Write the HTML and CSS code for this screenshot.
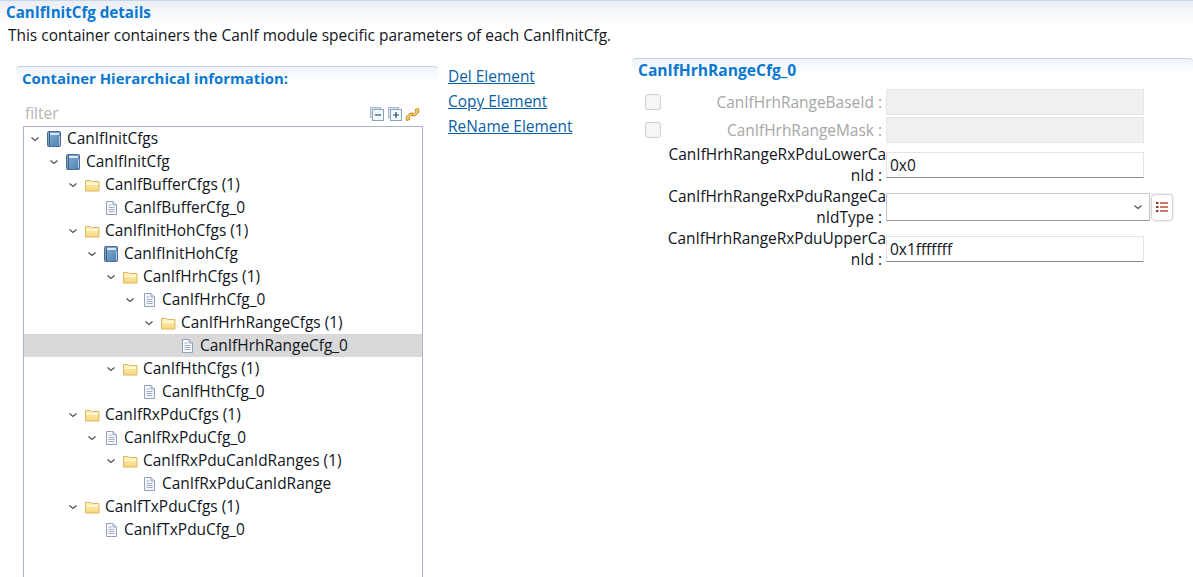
FILE: index.html
```html
<!DOCTYPE html>
<html lang="en">
<head>
<meta charset="utf-8">
<title>CanIfInitCfg details</title>
<link rel="stylesheet" href="styles.css">
</head>
<body>
<svg class="defs" width="0" height="0" aria-hidden="true">
  <defs>
    <linearGradient id="bookFill" x1="0" y1="0" x2="1" y2="1">
      <stop offset="0" stop-color="#8db2d4"/><stop offset="1" stop-color="#4d7fae"/>
    </linearGradient>
    <linearGradient id="folderFill" x1="0" y1="0" x2="0" y2="1">
      <stop offset="0" stop-color="#fdf0b8"/><stop offset="1" stop-color="#f8d77a"/>
    </linearGradient>
    <symbol id="chev" viewBox="0 0 12 12"><path d="M2.500 4.500l3.500 3 3.500-3" fill="none" stroke="#46505a" stroke-width="1.200"/></symbol>
    <symbol id="book" viewBox="0 0 16 16">
      <rect x="1.500" y="0.500" width="13" height="15" rx="1" fill="url(#bookFill)" stroke="#4a6d94"/>
      <rect x="4" y="2" width="9" height="2" fill="#dbe8f3"/>
      <path d="M3.500 1v14" stroke="#3d5f85"/>
      <path d="M13.500 5v9" stroke="#b4cde2"/>
    </symbol>
    <symbol id="folder" viewBox="0 0 16 16">
      <path d="M1.500 3.500h5l1 1h7.500v9.500h-13.500z" fill="url(#folderFill)" stroke="#dcb964"/>
      <path d="M2.500 7h11.500" stroke="#fffbe6" stroke-width="1.500"/>
    </symbol>
    <symbol id="doc" viewBox="0 0 16 16">
      <path d="M3.500 1.500h6.500l3.500 3.500v9.500h-10z" fill="#f8f9fc" stroke="#929fc0"/>
      <path d="M10 1.500v3.500h3.500" fill="none" stroke="#929fc0"/>
      <path d="M5.500 5h3M5.500 7.500h6M5.500 9.500h6M5.500 11.500h6" stroke="#a3aec4"/>
    </symbol>
    <symbol id="collapse" viewBox="0 0 14 14">
      <rect x="0.500" y="0.500" width="10" height="10" fill="#dbe6f1" stroke="#a3b9d0"/>
      <rect x="2.500" y="2.500" width="11" height="11" fill="#f5f8fb" stroke="#8aa3bd"/>
      <path d="M5 8h6" stroke="#1f4a73" stroke-width="1.200"/>
    </symbol>
    <symbol id="expand" viewBox="0 0 14 14">
      <rect x="0.500" y="0.500" width="10" height="10" fill="#dbe6f1" stroke="#a3b9d0"/>
      <rect x="2.500" y="2.500" width="11" height="11" fill="#f5f8fb" stroke="#8aa3bd"/>
      <path d="M5 8h6M8 5v6" stroke="#1f4a73" stroke-width="1.200"/>
    </symbol>
    <symbol id="sync" viewBox="0 0 15 15">
      <path d="M1.500 13.500l-.5-3.500 4-4 3 .5-.5 2.500-2-.5-1.500 1.500 1 2.500z" fill="#f3cf74" stroke="#c98f1f"/>
      <path d="M13.500 1.500l.5 3.500-4 4-3-.5.5-2.500 2 .5 1.500-1.500-1-2.500z" fill="#f3cf74" stroke="#c98f1f"/>
    </symbol>
    <symbol id="list" viewBox="0 0 14 14">
      <path d="M1 3h2.500M1 7h2.500M1 11h2.500" stroke="#9c3a26" stroke-width="2"/>
      <path d="M5 3h8M5 7h8M5 11h8" stroke="#b5533a" stroke-width="1.300"/>
    </symbol>
  </defs>
</svg>

<header class="page-head">
  <h1 class="page-title">CanIfInitCfg details</h1>
</header>
<p class="page-desc">This container containers the CanIf module specific parameters of each CanIfInitCfg.</p>

<main class="columns">
  <section class="panel tree-panel">
    <h2 class="panel-title">Container Hierarchical information:</h2>
    <div class="filter-row">
      <span class="filter">filter</span>
      <span class="tools">
        <svg class="tool"><use href="#collapse"/></svg>
        <svg class="tool"><use href="#expand"/></svg>
        <svg class="tool wide"><use href="#sync"/></svg>
      </span>
    </div>
    <ul class="tree">
      <li class="row l0"><svg class="tw"><use href="#chev"/></svg><svg class="ic"><use href="#book"/></svg><span>CanIfInitCfgs</span></li>
      <li class="row l1"><svg class="tw"><use href="#chev"/></svg><svg class="ic"><use href="#book"/></svg><span>CanIfInitCfg</span></li>
      <li class="row l2"><svg class="tw"><use href="#chev"/></svg><svg class="ic"><use href="#folder"/></svg><span>CanIfBufferCfgs (1)</span></li>
      <li class="row l3"><span class="tw"></span><svg class="ic"><use href="#doc"/></svg><span>CanIfBufferCfg_0</span></li>
      <li class="row l2"><svg class="tw"><use href="#chev"/></svg><svg class="ic"><use href="#folder"/></svg><span>CanIfInitHohCfgs (1)</span></li>
      <li class="row l3"><svg class="tw"><use href="#chev"/></svg><svg class="ic"><use href="#book"/></svg><span>CanIfInitHohCfg</span></li>
      <li class="row l4"><svg class="tw"><use href="#chev"/></svg><svg class="ic"><use href="#folder"/></svg><span>CanIfHrhCfgs (1)</span></li>
      <li class="row l5"><svg class="tw"><use href="#chev"/></svg><svg class="ic"><use href="#doc"/></svg><span>CanIfHrhCfg_0</span></li>
      <li class="row l6"><svg class="tw"><use href="#chev"/></svg><svg class="ic"><use href="#folder"/></svg><span>CanIfHrhRangeCfgs (1)</span></li>
      <li class="row l7 selected"><span class="tw"></span><svg class="ic"><use href="#doc"/></svg><span>CanIfHrhRangeCfg_0</span></li>
      <li class="row l4"><svg class="tw"><use href="#chev"/></svg><svg class="ic"><use href="#folder"/></svg><span>CanIfHthCfgs (1)</span></li>
      <li class="row l5"><span class="tw"></span><svg class="ic"><use href="#doc"/></svg><span>CanIfHthCfg_0</span></li>
      <li class="row l2"><svg class="tw"><use href="#chev"/></svg><svg class="ic"><use href="#folder"/></svg><span>CanIfRxPduCfgs (1)</span></li>
      <li class="row l3"><svg class="tw"><use href="#chev"/></svg><svg class="ic"><use href="#doc"/></svg><span>CanIfRxPduCfg_0</span></li>
      <li class="row l4"><svg class="tw"><use href="#chev"/></svg><svg class="ic"><use href="#folder"/></svg><span>CanIfRxPduCanIdRanges (1)</span></li>
      <li class="row l5"><span class="tw"></span><svg class="ic"><use href="#doc"/></svg><span>CanIfRxPduCanIdRange</span></li>
      <li class="row l2"><svg class="tw"><use href="#chev"/></svg><svg class="ic"><use href="#folder"/></svg><span>CanIfTxPduCfgs (1)</span></li>
      <li class="row l3"><span class="tw"></span><svg class="ic"><use href="#doc"/></svg><span>CanIfTxPduCfg_0</span></li>
    </ul>
  </section>

  <nav class="actions">
    <a href="#">Del Element</a>
    <a href="#">Copy Element</a>
    <a href="#">ReName Element</a>
  </nav>

  <section class="panel form-panel">
    <h2 class="panel-title">CanIfHrhRangeCfg_0</h2>
    <div class="form">
      <div class="f-row short">
        <span class="check"></span>
        <label class="f-label off">CanIfHrhRangeBaseId :&nbsp;</label>
        <span class="input disabled"></span>
      </div>
      <div class="f-row short">
        <span class="check"></span>
        <label class="f-label off">CanIfHrhRangeMask :&nbsp;</label>
        <span class="input disabled"></span>
      </div>
      <div class="f-row">
        <span></span>
        <label class="f-label">CanIfHrhRangeRxPduLowerCa<br>nId :&nbsp;</label>
        <span class="input">0x0</span>
      </div>
      <div class="f-row">
        <span></span>
        <label class="f-label">CanIfHrhRangeRxPduRangeCa<br>nIdType :&nbsp;</label>
        <span class="input combo"><svg class="combo-arrow"><use href="#chev"/></svg></span>
        <span class="list-btn"><svg class="list-ic"><use href="#list"/></svg></span>
      </div>
      <div class="f-row">
        <span></span>
        <label class="f-label">CanIfHrhRangeRxPduUpperCa<br>nId :&nbsp;</label>
        <span class="input">0x1fffffff</span>
      </div>
    </div>
  </section>
</main>
</body>
</html>
```
FILE: styles.css
```css
* { box-sizing: border-box; }
html, body { height: 577px; overflow: hidden; }
body {
  margin: 0;
  background: #fff;
  color: #10151c;
  font-family: "Open Sans", "Noto Sans", sans-serif;
  font-size: 15.45px;
}
.defs { display: block; height: 0; }

.page-head {
  height: 24px;
  padding: 2px 0 0 6px;
  border-top: 1px solid #c7d6e6;
  background: linear-gradient(#e9eef5, #ffffff);
}
.page-title {
  margin: 0;
  font-size: 15.15px;
  line-height: 18px;
  font-weight: 700;
  color: #0a78d0;
}
.page-desc {
  margin: 0;
  padding-left: 8px;
  height: 21px;
  line-height: 23px;
}

.columns {
  display: grid;
  grid-template-columns: 422px 174px 561px;
  column-gap: 10px;
  padding-left: 16px;
}
.form-panel { margin-top: 13px; }
.tree-panel { margin-top: 21px; }

.panel {
  border-top: 1px solid #c3d5e8;
  border-radius: 4px 4px 0 0;
  background: linear-gradient(#eef3f9, #ffffff 14px);
}
.panel-title {
  margin: 0;
  padding: 0 0 2px 6px;
  font-size: 14.9px;
  line-height: 22px;
  font-weight: 700;
  color: #0a78d0;
}

.filter-row {
  display: flex;
  justify-content: space-between;
  align-items: center;
  width: 404px;
  height: 35px;
  padding: 9px 0 0 9px;
}
.filter { color: #b5b5b5; }
.tools { display: flex; gap: 4px; align-items: center; margin-top: 2px; }
.tool { width: 14px; height: 14px; }
.tool.wide { width: 15px; height: 15px; margin-left: -1px; }

.tree {
  list-style: none;
  margin: 0 0 0 7px;
  padding: 0;
  width: 400px;
  height: 460px;
  border: 1px solid #a9b5c5;
}
.row {
  display: flex;
  align-items: center;
  height: 23px;
  white-space: nowrap;
}
.row > span:last-child { margin-bottom: 2px; }
.tw { flex: none; width: 12px; height: 12px; margin-right: 5px; }
.ic { flex: none; width: 16px; height: 16px; margin-right: 5px; }
.l0 { padding-left: 5px; }
.l1 { padding-left: 24px; }
.l2 { padding-left: 43px; }
.l3 { padding-left: 62px; }
.l4 { padding-left: 81px; }
.l5 { padding-left: 100px; }
.l6 { padding-left: 119px; }
.l7 { padding-left: 138px; }
.selected { background: #d9d9d9; }

.actions {
  display: flex;
  flex-direction: column;
  margin-top: 21px;
}
.actions a {
  height: 25px;
  line-height: 21px;
  color: #0b5fa5;
  text-decoration: underline;
}

.form-panel .panel-title { font-size: 15.6px; }
.form { padding-top: 5px; }
.f-row {
  display: grid;
  grid-template-columns: 34px 220px 258px 7px 22px;
  align-items: center;
  height: 42px;
}
.f-row.short { height: 28px; }
.check {
  width: 16px;
  height: 16px;
  margin-left: 13px;
  border: 1px solid #cfcfcf;
  border-radius: 3px;
  background: #f6f6f6;
}
.f-label {
  line-height: 21px;
  text-align: right;
  white-space: nowrap;
}
.f-label.off { color: #a6a6a6; }
.input {
  display: flex;
  align-items: center;
  height: 26px;
  padding-left: 3px;
  border: 1px solid #e4e4e4;
  border-bottom: 1px solid #8a8a8a;
  background: #fff;
}
.input.disabled {
  border: 1px solid #e6e6e6;
  background: #f0f0f0;
}
.input.combo {
  justify-content: flex-end;
  height: 28px;
  margin-right: -6px;
  padding-right: 3px;
  border: 1px solid #c8c8c8;
  border-bottom-color: #9a9a9a;
}
.combo-arrow { width: 12px; height: 12px; margin-right: 2px; }
.list-btn {
  grid-column: 5;
  display: flex;
  align-items: center;
  justify-content: center;
  height: 27px;
  border: 1px solid #d6d6d6;
  border-radius: 4px;
  background: #fff;
  box-shadow: 0 0 0 1px #f0f0f0;
}
.list-ic { width: 14px; height: 14px; }
```
